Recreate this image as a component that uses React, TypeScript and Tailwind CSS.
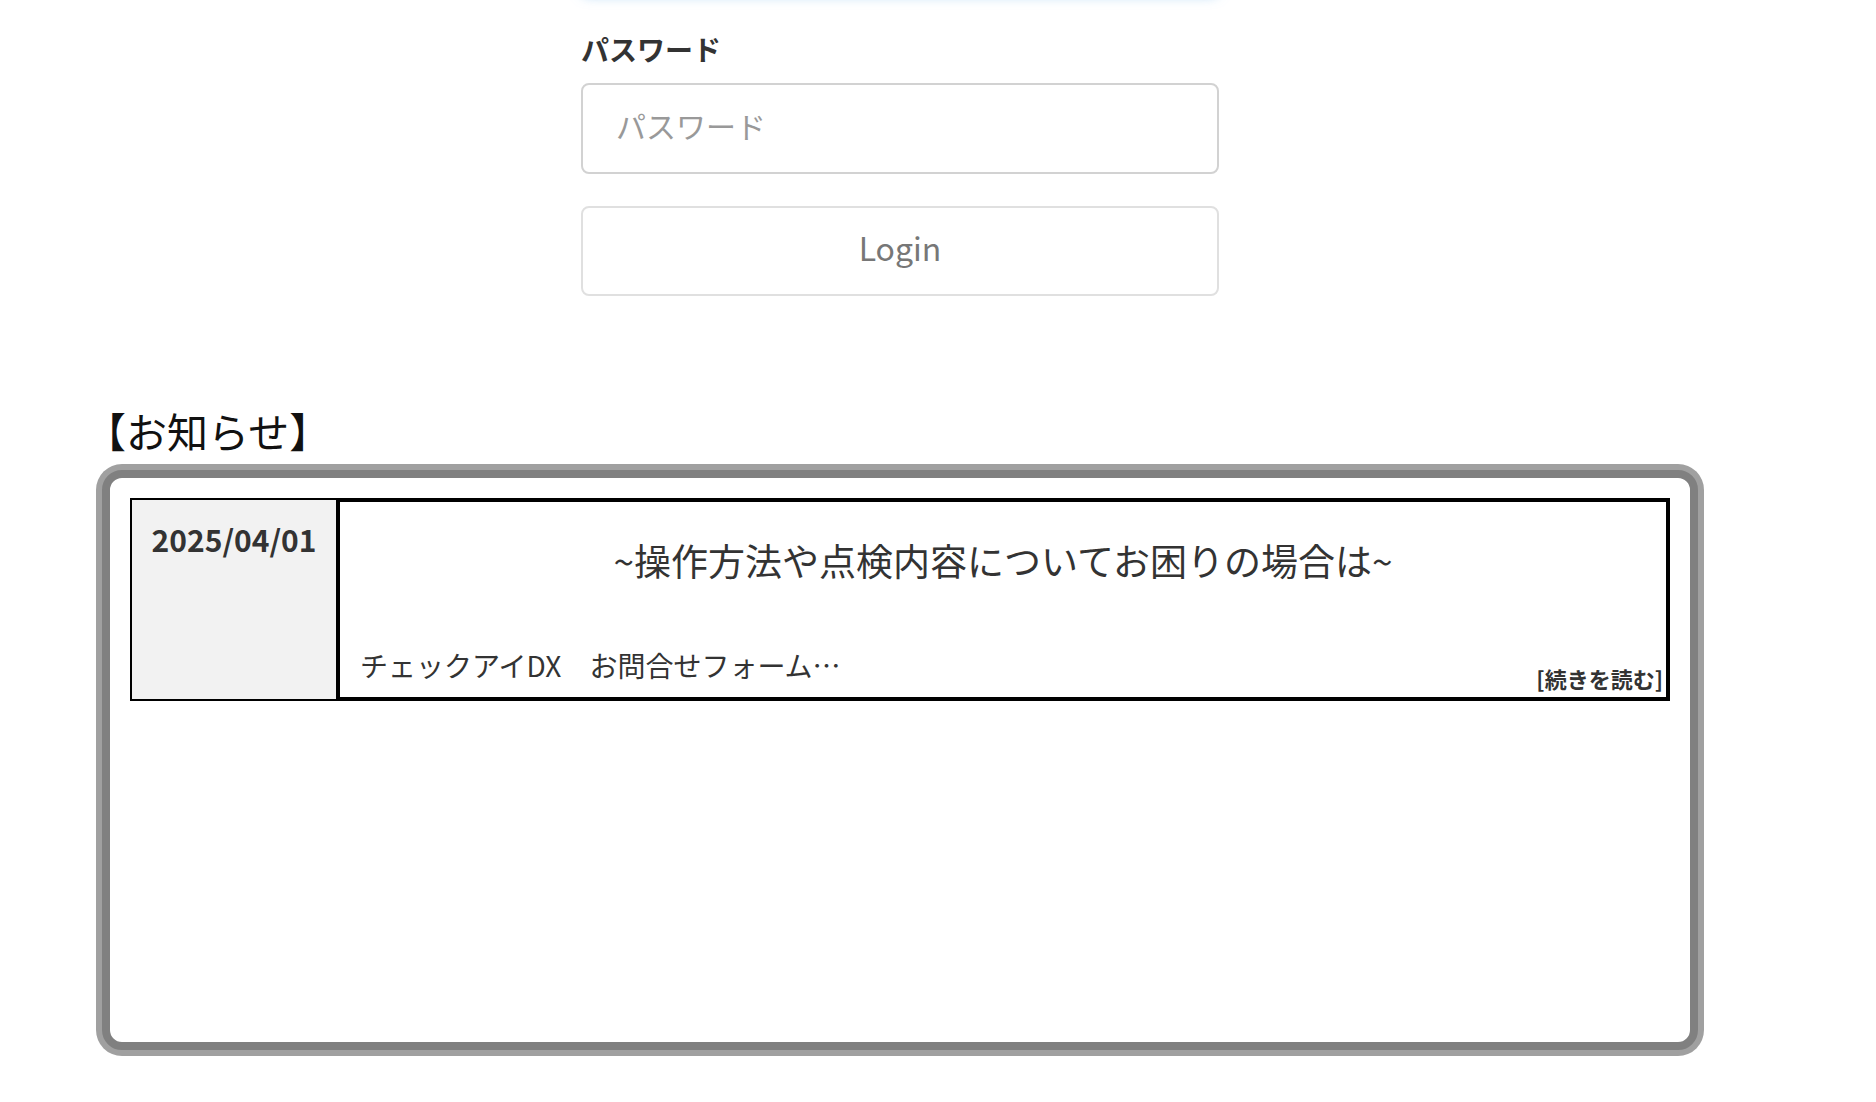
import React from "react";

const jp = { fontFamily: '"Noto Sans CJK JP", "Noto Sans", sans-serif' };

const notices = [
  {
    date: "2025/04/01",
    title: "~操作方法や点検内容についてお困りの場合は~",
    body: "チェックアイDX　お問合せフォーム…",
  },
];

export default function App() {
  return (
    <div className="min-h-screen bg-white overflow-hidden" style={jp}>
      <div className="pl-[96px] w-[1703px]">
        {/* login form */}
        <div className="ml-[485px] w-[638px] flex flex-col">
          {/* previous (focused) input, scrolled off the top */}
          <div className="h-[91px] -mt-[95px] mb-[4px] rounded-[8px] border border-[#66afe9] bg-white shadow-[0_0_12px_rgba(102,175,233,0.55)]" />
          <label className="mt-[28px] text-[28px] leading-[42px] font-bold text-[#333]">
            パスワード
          </label>
          <input
            type="password"
            placeholder="パスワード"
            className="mt-[13px] h-[91px] w-full rounded-[8px] border-2 border-[#d2d2d2] px-[33px] pb-[8px] text-[30px] text-[#333] placeholder:text-[#999] outline-none"
            style={jp}
          />
          <button
            className="mt-[32px] h-[90px] w-full rounded-[8px] border-2 border-[#e0e0e0] bg-white pb-[8px] text-[32px] text-[#777]"
            style={jp}
          >
            Login
          </button>
        </div>

        {/* notices */}
        <h2 className="mt-[104px] -ml-[11px] text-[41px] leading-[60px] text-[#111]">【お知らせ】</h2>
        <div className="mt-[10px] ml-[6px] w-[1596px] h-[580px] rounded-[20px] border-8 border-[#808080] shadow-[0_0_0_6px_#a0a0a0] bg-white p-[20px]">
          {notices.map((n) => (
            <div key={n.date} className="flex h-[203px]">
              <div className="w-[206px] shrink-0 border-2 border-r-0 border-black bg-[#f2f2f2] pt-[17px] text-center">
                <span className="text-[30px] font-bold text-[#333]">{n.date}</span>
              </div>
              <div className="flex-1 border-4 border-black flex flex-col pl-[20px] pr-[3px]">
                <p className="mt-[34px] text-center text-[37px] leading-[48px] text-[#333] pr-[17px]">{n.title}</p>
                <div className="mt-auto flex items-end justify-between pb-[4px]">
                  <span className="text-[28px] leading-[40px] text-[#333] mb-[8px]">{n.body}</span>
                  <span className="text-[22px] leading-[30px] font-bold text-[#333]">[続きを読む]</span>
                </div>
              </div>
            </div>
          ))}
        </div>
      </div>
    </div>
  );
}
